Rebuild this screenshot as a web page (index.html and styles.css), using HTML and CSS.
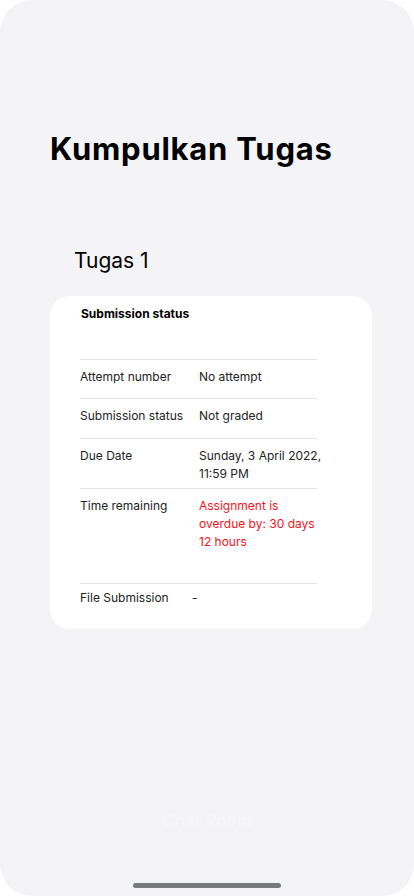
FILE: index.html
```html
<!DOCTYPE html>
<html lang="id">
<head>
<meta charset="utf-8">
<title>Kumpulkan Tugas</title>
<link rel="stylesheet" href="styles.css">
</head>
<body>
<div class="screen">
  <h1 class="title">Kumpulkan Tugas</h1>
  <h2 class="subtitle">Tugas 1</h2>
  <section class="card">
    <h3 class="card-head">Submission status</h3>
    <div class="table">
      <div class="row h39"><span class="label">Attempt number</span><span class="value">No attempt</span></div>
      <div class="row h40"><span class="label">Submission status</span><span class="value">Not graded</span></div>
      <div class="row h50"><span class="label">Due Date</span><span class="value">Sunday, 3 April 2022,<br>11:59 PM</span></div>
      <div class="row h95"><span class="label">Time remaining</span><span class="value red">Assignment is<br>overdue by: 30 days<br>12 hours</span></div>
      <div class="row last"><span class="label">File Submission</span><span class="value dash">-</span></div>
    </div>
  </section>
  <div class="chat">Chat Room</div>
  <div class="home-bar"></div>
</div>
</body>
</html>
```

FILE: styles.css
```css
* { box-sizing: border-box; }
html, body { margin: 0; padding: 0; background: #ffffff; }
body { font-family: "Inter", "Noto Sans", sans-serif; color: #111; }

.screen {
  width: 414px;
  height: 896px;
  background: #f4f4f6;
  border-radius: 32px;
  display: flex;
  flex-direction: column;
  overflow: hidden;
}

.title {
  margin: 130px 0 0 50px;
  font-size: 31px;
  line-height: 38px;
  font-weight: 700;
  letter-spacing: 0.75px;
  color: #000;
}

.subtitle {
  margin: 77px 0 0 74px;
  font-size: 21px;
  line-height: 32px;
  font-weight: 400;
  color: #000;
}

.card {
  margin: 19px 42px 0 50px;
  background: #fff;
  border-radius: 20px;
  padding: 9px 0 22px 30px;
}

.card-head {
  margin: 0 0 36px 1px;
  font-size: 12px;
  line-height: 18px;
  font-weight: 700;
  color: #000;
}

.table { width: 237px; }

.row {
  display: flex;
  border-top: 1px solid #e4e4e6;
  padding-top: 8px;
  font-size: 12px;
  line-height: 18px;
  color: #222;
}
.row.h39 { height: 39px; }
.row.h40 { height: 40px; }
.row.h50 { height: 50px; }
.row.h95 { height: 95px; }
.row.last { padding-top: 5px; }

.label { width: 119px; flex: none; }
.value { white-space: nowrap; }
.value.red { color: #f5121c; }
.value.dash { margin-left: -7px; }

.chat {
  margin-top: auto;
  text-align: center;
  font-size: 17px;
  font-weight: 700;
  color: #f7f7f9;
  line-height: 22px;
}

.home-bar {
  margin: 51px auto 8px;
  width: 148px;
  height: 5px;
  border-radius: 3px;
  background: #777b7b;
}
```
